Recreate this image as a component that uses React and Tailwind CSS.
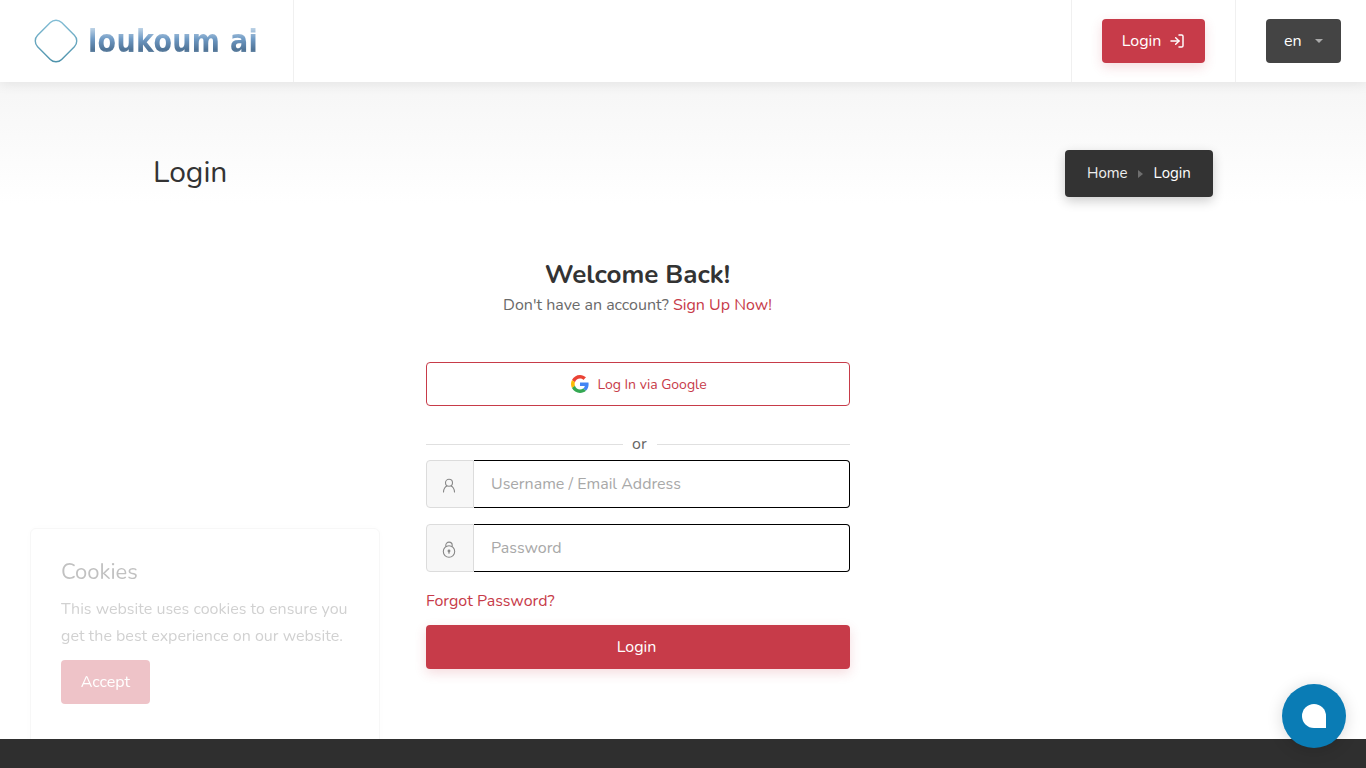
import { LogIn } from "lucide-react";

function GoogleIcon() {
  return (
    <svg viewBox="0 0 48 48" className="w-[18px] h-[18px]">
      <path fill="#EA4335" d="M24 9.500c3.500 0 6.700 1.200 9.100 3.600l6.800-6.800C35.800 2.500 30.300 0 24 0 14.600 0 6.500 5.400 2.600 13.200l7.900 6.200C12.400 13.700 17.700 9.500 24 9.500z" />
      <path fill="#4285F4" d="M46.900 24.500c0-1.600-.1-3.100-.4-4.500H24v9h12.900c-.6 3-2.200 5.500-4.800 7.200l7.700 6c4.500-4.200 7.100-10.300 7.100-17.700z" />
      <path fill="#FBBC05" d="M10.500 28.600A14.500 14.500 0 0 1 9.700 24c0-1.600.3-3.100.8-4.600l-7.900-6.200A24 24 0 0 0 0 24c0 3.900.9 7.500 2.600 10.800l7.900-6.200z" />
      <path fill="#34A853" d="M24 48c6.500 0 11.900-2.100 15.900-5.800l-7.700-6c-2.200 1.400-4.900 2.300-8.200 2.300-6.300 0-11.600-4.200-13.500-9.900l-7.900 6.200C6.500 42.600 14.600 48 24 48z" />
    </svg>
  );
}

function UserIcon() {
  return (
    <svg viewBox="0 0 14 15" fill="none" stroke="#888" strokeWidth="1.1" className="w-[14px] h-[15px]">
      <circle cx="7" cy="4.800" r="3.500" />
      <path d="M1.500 14c0-3.200 2-5.700 3.200-5.900M12.500 14c0-3.200-2-5.700-3.200-5.900" strokeLinecap="round" />
    </svg>
  );
}

function LockIcon() {
  return (
    <svg viewBox="0 0 14 17" fill="none" stroke="#888" strokeWidth="1.1" className="w-[14px] h-[17px]">
      <circle cx="7" cy="10.500" r="5.700" />
      <path d="M3.800 5.800V4.300a3.200 3.200 0 0 1 6.400 0v1.500" />
      <circle cx="7" cy="10" r="0.900" fill="#888" />
      <path d="M7 10.500v2.200" />
    </svg>
  );
}

function LogoMark() {
  return (
    <svg viewBox="0 0 44 44" fill="none" className="w-[44px] h-[44px] shrink-0">
      <defs>
        <linearGradient id="mark" x1="0" y1="0" x2="1" y2="1">
          <stop offset="0" stopColor="#86c0d8" />
          <stop offset="1" stopColor="#4a8fa8" />
        </linearGradient>
      </defs>
      <rect x="5" y="5" width="34" height="34" rx="8" transform="rotate(45 22 22)" stroke="url(#mark)" strokeWidth="1.400" />
    </svg>
  );
}

function InputRow({ icon, placeholder }) {
  return (
    <div className="flex h-[48px]">
      <div className="w-[48px] flex items-center justify-center pt-[2px] pr-[2px] bg-[#f7f7f7] border border-[#dcdcdc] rounded-l-[4px]">
        {icon}
      </div>
      <input
        placeholder={placeholder}
        className="flex-1 min-w-0 px-[17px] bg-white border border-l-0 border-black rounded-r-[4px] text-[16px] text-[#333] placeholder:text-[#a8a8a8] outline-none"
      />
    </div>
  );
}

export default function App() {
  return (
    <div className="h-screen overflow-hidden flex flex-col bg-white text-[#333] font-['Nunito','Lato','Open_Sans',sans-serif] relative">
      {/* Header */}
      <header className="h-[82px] shrink-0 flex bg-white relative z-10 shadow-[0_2px_12px_rgba(0,0,0,0.08)]">
        <div className="w-[294px] border-r border-[#f0f0f0] flex items-center pl-[34px] gap-[10px]">
          <LogoMark />
          <span className="font-['DejaVu_Sans',sans-serif] font-bold text-[27px] leading-[34px] tracking-[0.3px] scale-y-[1.2] text-transparent bg-clip-text bg-[linear-gradient(180deg,#c6d9ea_15%,#6f9ac4_45%,#4f7396_72%,#a8c0d6_90%)]">
            loukoum ai
          </span>
        </div>
        <div className="flex-1" />
        <div className="w-[165px] border-x border-[#f0f0f0] flex items-center justify-center">
          <button className="w-[103px] h-[44px] flex items-center justify-center gap-[8px] bg-[#c73b49] text-white text-[16px] rounded-[4px] shadow-[0_4px_12px_rgba(201,56,72,0.18)]">
            Login
            <LogIn size={16} strokeWidth={2.2} />
          </button>
        </div>
        <div className="w-[130px] flex items-center pl-[30px]">
          <button className="w-[75px] h-[44px] flex items-center pl-[18px] gap-[13px] bg-[#444] text-white text-[16px] rounded-[4px]">
            en
            <span className="w-0 h-0 border-x-[4px] border-x-transparent border-t-[4px] border-t-[#aaa]" />
          </button>
        </div>
      </header>

      <main className="flex-1 min-h-0 flex flex-col">
        {/* Page title */}
        <section className="h-[174px] shrink-0 bg-gradient-to-b from-[#f6f6f6] to-white to-[70%]">
          <div className="w-[1060px] ml-[153px] pt-[68px] flex items-start justify-between">
            <h1 className="text-[30px] leading-[44px] pt-[1px] text-[#333]">Login</h1>
            <div className="h-[47px] w-[148px] flex items-center pl-[22px] bg-[#333] rounded-[4px] text-[15px] text-white shadow-[0_4px_12px_rgba(0,0,0,0.2)]">
              <span className="text-[#eee]">Home</span>
              <span className="ml-[10px] mr-[11px] w-0 h-0 border-y-[4.500px] border-y-transparent border-l-[5px] border-l-[#6e6e6e]" />
              <span>Login</span>
            </div>
          </div>
        </section>

        {/* Login form */}
        <section className="w-[424px] ml-[426px]">
          <div className="text-center pr-[1px]">
            <h2 className="text-[26px] leading-[36px] pt-[1px] font-bold text-[#333]">Welcome Back!</h2>
            <p className="text-[16px] leading-[24px] text-[#6a6a6a]">
              Don't have an account? <a className="text-[#c73b49]">Sign Up Now!</a>
            </p>
          </div>

          <button className="mt-[45px] w-full h-[44px] flex items-center justify-center gap-[8px] pl-[2px] border border-[#c73b49] rounded-[4px] text-[14px] text-[#c73b49] bg-white">
            <GoogleIcon />
            Log In via Google
          </button>

          <div className="mt-[28px] h-[20px] flex items-center gap-[9px] text-[16px] text-[#666]">
            <div className="h-px bg-[#e0e0e0] w-[197px]" />
            <span className="mr-[1px]">or</span>
            <div className="h-px bg-[#e0e0e0] flex-1" />
          </div>

          <div className="mt-[6px] flex flex-col gap-[16px]">
            <InputRow icon={<UserIcon />} placeholder="Username / Email Address" />
            <InputRow icon={<LockIcon />} placeholder="Password" />
          </div>

          <a className="block mt-[17px] text-[16px] leading-[24px] text-[#c73b49]">Forgot Password?</a>

          <button className="mt-[12px] w-full h-[44px] pr-[3px] bg-[#c73b49] text-white text-[16px] rounded-[4px] shadow-[0_4px_12px_rgba(201,56,72,0.18)]">
            Login
          </button>
        </section>
      </main>

      <footer className="h-[29px] shrink-0 bg-[#2f2f2f] relative z-20" />

      {/* Cookie notice */}
      <div className="fixed left-[30px] top-[528px] w-[350px] h-[260px] pt-[29px] px-[30px] bg-white border border-[#e4e4e4] rounded-[6px] shadow-[0_0_10px_rgba(0,0,0,0.06)] opacity-30 z-10">
        <h3 className="text-[22px] leading-[28px] text-[#333]">Cookies</h3>
        <p className="mt-[10px] text-[16px] leading-[27px] text-[#666]">
          This website uses cookies to ensure you get the best experience on our website.
        </p>
        <button className="mt-[10px] w-[89px] h-[44px] bg-[#c73b49] text-white text-[16px] rounded-[4px]">Accept</button>
      </div>

      {/* Chat bubble */}
      <div className="fixed left-[1282px] top-[684px] w-[64px] h-[64px] rounded-full bg-[#0a7cb5] flex items-center justify-center shadow-[0_2px_16px_rgba(0,0,0,0.15)] z-30">
        <div className="w-[24px] h-[24px] bg-white rounded-[12px] rounded-br-none" />
      </div>
    </div>
  );
}
